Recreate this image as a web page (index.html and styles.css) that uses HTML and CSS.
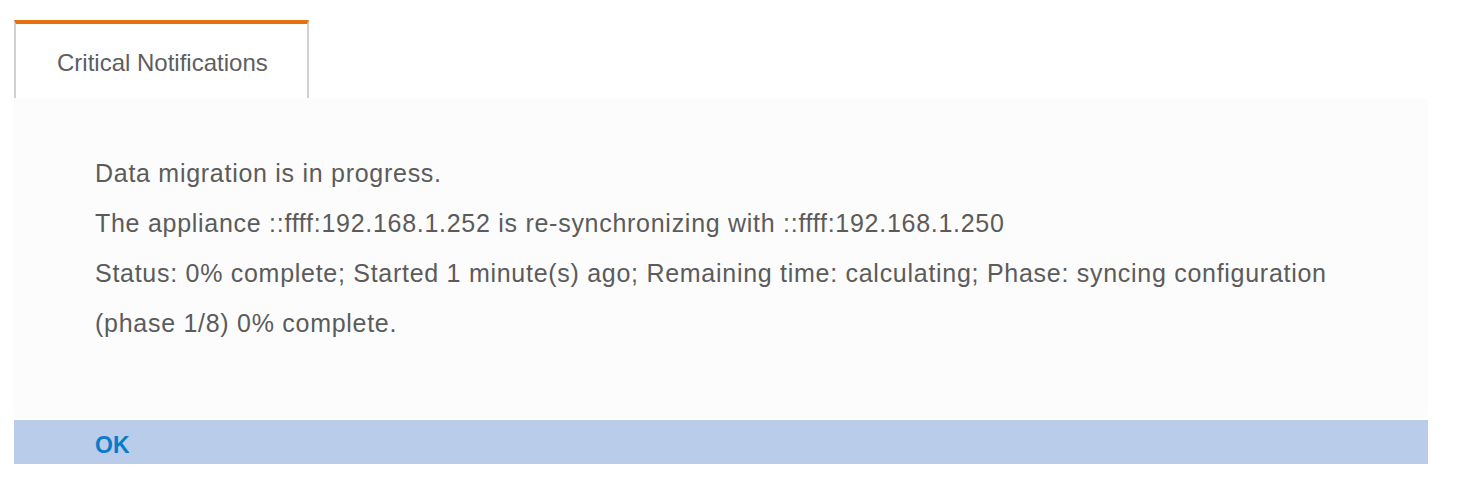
FILE: index.html
```html
<!DOCTYPE html>
<html>
<head>
  <meta charset="UTF-8">
  <title>Critical Notifications</title>
  <link rel="stylesheet" href="styles.css">
</head>
<body>
  <div class="dialog">
    <div class="tabs">
      <div class="tab active">Critical Notifications</div>
    </div>
    <div class="panel">
      <p>Data migration is in progress.</p>
      <p>The appliance ::ffff:192.168.1.252 is re-synchronizing with ::ffff:192.168.1.250</p>
      <p>Status: 0% complete; Started 1 minute(s) ago; Remaining time: calculating; Phase: syncing configuration (phase 1/8) 0% complete.</p>
    </div>
    <div class="button-bar">
      <a class="ok-btn" href="#">OK</a>
    </div>
  </div>
</body>
</html>
```

FILE: styles.css
```css
body { font-family: "Liberation Sans", Arial, sans-serif; margin: 0; padding: 0; background-color: #fff; color: #5b5b5b; }
.dialog { margin: 20px 32px 0 14px; }
.tabs { display: flex; }
.tab {
  width: 295px;
  height: 78px;
  box-sizing: border-box;
  padding: 24px 0 0 41px;
  font-size: 24px;
  line-height: 30px;
  color: #5e5e5e;
  background-color: #fff;
  border-top: 4px solid #e8700f;
  border-left: 2px solid #d0d0d0;
  border-right: 2px solid #d0d0d0;
}
.panel {
  background-color: #fcfcfc;
  padding: 50px 80px 70px 81px;
  border-radius: 0 0 6px 6px;
}
.panel p { margin: 0; font-size: 25px; letter-spacing: 0.72px; line-height: 50px; }
.button-bar {
  margin-top: 2px;
  height: 44px;
  box-sizing: border-box;
  padding: 6px 0 0 81px;
  background-color: #b9cdea;
  display: flex;
  align-items: center;
}
.ok-btn { color: #0a7bcb; font-weight: bold; font-size: 23px; text-decoration: none; }
```
